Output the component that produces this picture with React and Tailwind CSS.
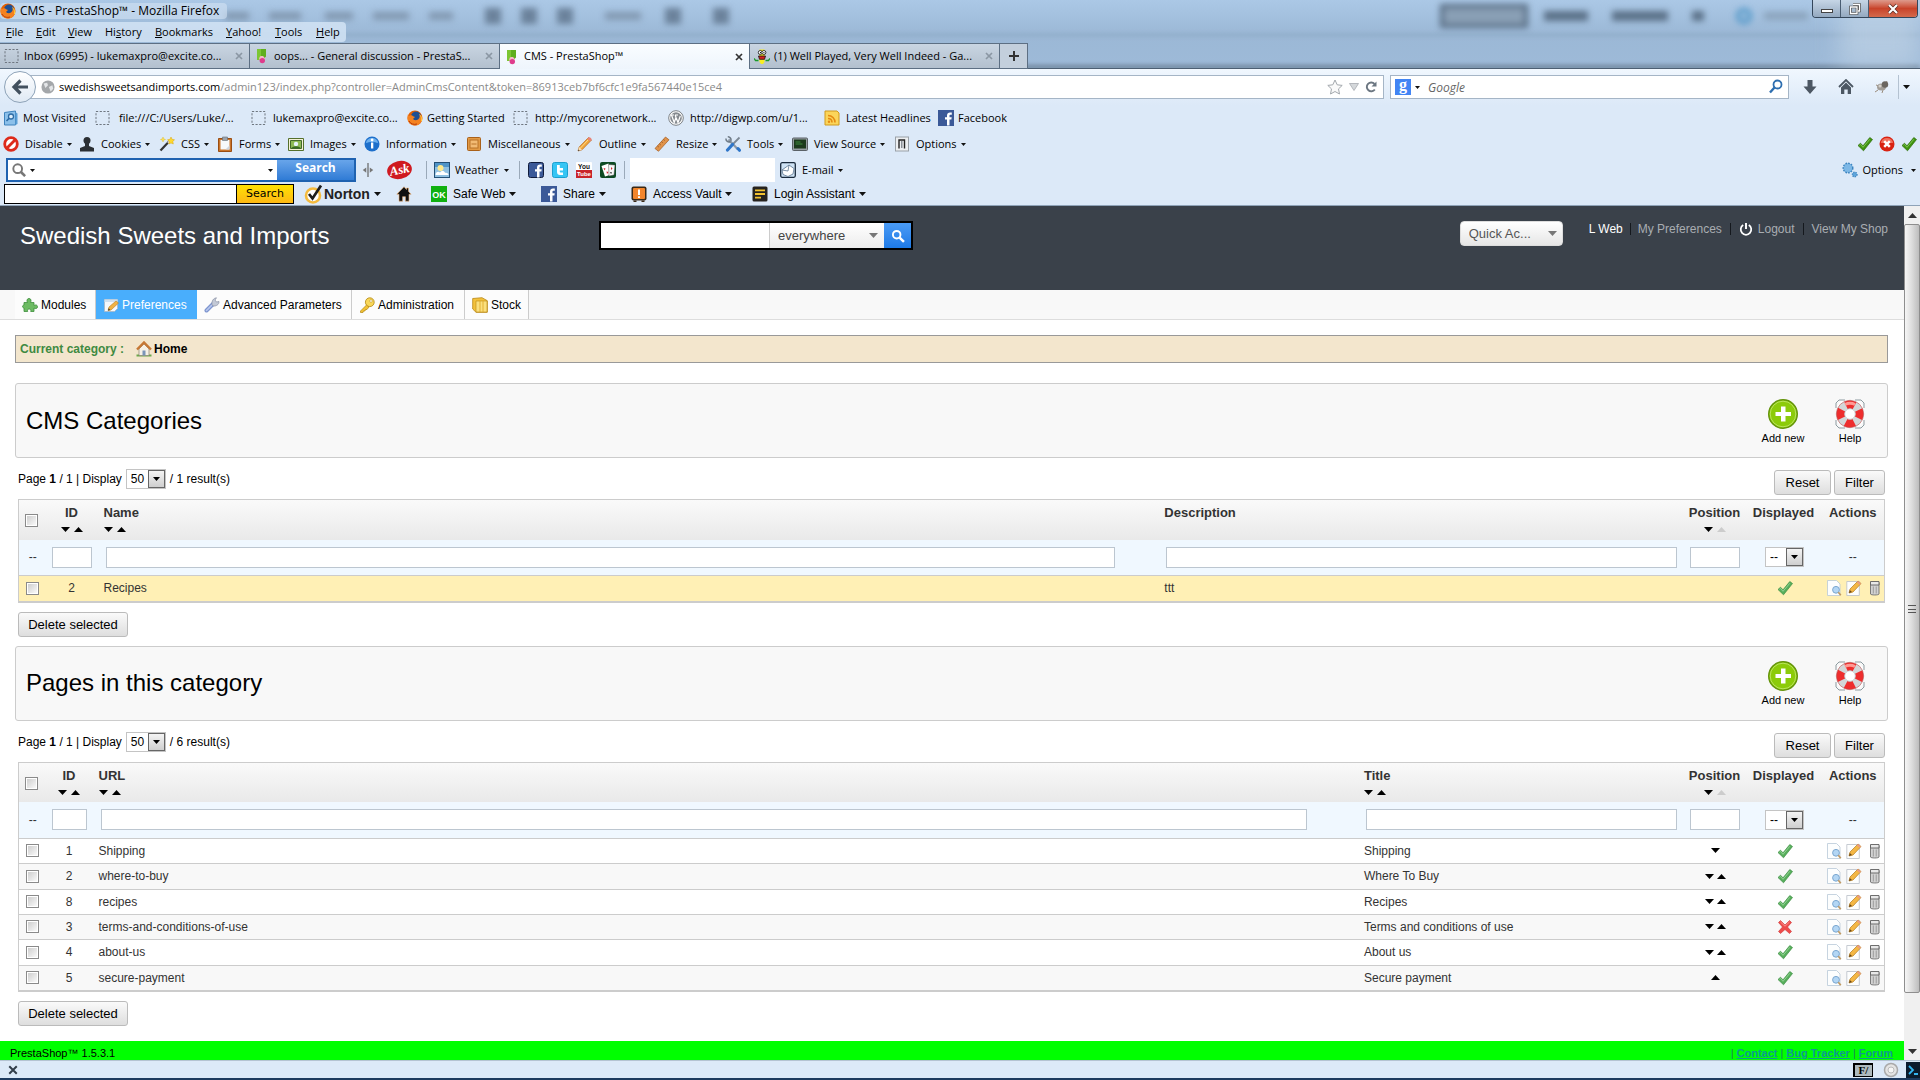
import React from "react";

const chromeFont = "font-['Open_Sans','Noto_Sans',sans-serif]";
const pageFont = "font-['Liberation_Sans',Arial,sans-serif]";

/* ---------- small drawings ---------- */

function Svg({ children, size = "size-4", box = "0 0 16 16", className = "" }) {
  return (
    <svg viewBox={box} className={`${size} shrink-0 ${className}`} fill="none" aria-hidden="true">
      {children}
    </svg>
  );
}

function Down({ className = "text-black" }) {
  return (
    <svg viewBox="0 0 9 5" className={`h-[5px] w-[9px] shrink-0 ${className}`} aria-hidden="true">
      <path d="M0 0h9L4.5 5z" fill="currentColor" />
    </svg>
  );
}

function Up({ className = "text-black" }) {
  return (
    <svg viewBox="0 0 9 5" className={`h-[5px] w-[9px] shrink-0 ${className}`} aria-hidden="true">
      <path d="M0 5h9L4.5 0z" fill="currentColor" />
    </svg>
  );
}

function Caret({ className = "" }) {
  return (
    <svg viewBox="0 0 5 3" className={`h-[3px] w-[5px] shrink-0 ${className}`} aria-hidden="true">
      <path d="M0 0h5L2.5 3z" fill="#111" />
    </svg>
  );
}

function WideCaret() {
  return (
    <svg viewBox="0 0 7 4" className="h-1 w-[7px] shrink-0" aria-hidden="true">
      <path d="M0 0h7L3.5 4z" fill="#111" />
    </svg>
  );
}

const Firefox = () => (
  <Svg>
    <circle cx="8" cy="8" r="7.500" fill="#e66000" />
    <circle cx="9" cy="6.500" r="5" fill="#1f4f93" />
    <path d="M1 4c0 1 .5 1.500 1 2 1-.8 2.500-1 3.500-.3.700.8 1.800.8 2.500 1.300-.5 1-1.800 1-1.800 2 .8 1.500 3.300 1.500 4.800.5 1.500-1 2-3 1.500-5 1.500 1.500 2.700 3.500 2 6.500-1 3.500-4 4.700-7 4.500C3 15 .5 12 .5 8.500.5 6.800.7 5 1 4z" fill="#f58220" />
    <path d="M12.500 4.500c1.500 1.500 2.700 3.500 2 6.500" stroke="#ffd23a" strokeWidth="1" />
    <path d="M2 11c1.500 3 5 4 8 3" stroke="#b53a0c" strokeWidth="1" />
  </Svg>
);

const Dashed = () => (
  <Svg>
    <rect x="1" y="1.500" width="13" height="13" stroke="#6f7780" strokeDasharray="2.200 1.500" />
  </Svg>
);

const Presta = () => (
  <Svg>
    <path d="M3 1h9v7.500l-3 3V9H7v3H3z" fill="#5fae1d" />
    <path d="M3 1h4v11H3z" fill="#7cc634" />
    <path d="M5.500 9.500c.5-2 4.500-2 5 .5l.5 1.500H5z" fill="#f6b7c8" />
    <circle cx="8.300" cy="12.600" r="2.700" fill="#df3c8c" />
  </Svg>
);

const Banana = () => (
  <Svg>
    <path d="M5.500 1.500h5V14L9 16H7l-1.500-2z" fill="#f8ee22" />
    <circle cx="6.300" cy="4.500" r="2" fill="#fff" stroke="#111" strokeWidth=".8" />
    <circle cx="9.900" cy="4.500" r="2" fill="#fff" stroke="#111" strokeWidth=".8" />
    <path d="M6 4h1v1.300H6zM9.400 4h1v1.300h-1z" fill="#111" />
    <path d="M4.500 8h7l-1 3.300h-5z" fill="#d42020" stroke="#111" strokeWidth=".8" />
    <path d="M0 10.500l1.500 2L4.500 12.500M16 10.500l-1.500 2L11.500 12.500" stroke="#1a9a2a" strokeWidth="1.300" />
  </Svg>
);

const MostVisited = () => (
  <Svg>
    <path d="M1.500 2.500l11-1.500v14H1.500z" fill="#8cc0ea" stroke="#3f83bd" />
    <path d="M12.500 2l2 1.500V14l-2 1z" fill="#5b9fd6" />
    <circle cx="8" cy="6.500" r="2.500" fill="#dceefb" stroke="#2d6ba5" strokeWidth="1.300" />
    <path d="M6.200 8.300L3.500 11" stroke="#2d6ba5" strokeWidth="1.600" />
  </Svg>
);

const WordPress = () => (
  <Svg>
    <circle cx="8" cy="8" r="7.300" fill="#fff" stroke="#7b8085" strokeWidth="1" />
    <circle cx="8" cy="8" r="5.800" fill="#858a8f" />
    <path d="M3.500 5l2.700 7.500L8 7.500l2 5L12.300 6M3 5h3M7 5h3M8 7.500L7.200 5" stroke="#fff" strokeWidth="1.200" />
  </Svg>
);

const Rss = () => (
  <Svg>
    <path d="M1 1h12l2 2v12H1z" fill="#fbd55a" stroke="#d19a1c" />
    <path d="M4 5.500c4 0 7 3 7 7M4 8.500c2.300 0 4 1.700 4 4" stroke="#e58a12" strokeWidth="1.600" />
    <circle cx="5" cy="11.700" r="1.200" fill="#e58a12" />
  </Svg>
);

const Facebook = ({ dark }) => (
  <Svg>
    <rect x=".5" y=".5" width="15" height="15" rx={dark ? 2 : 0} fill="#3b5998" stroke={dark ? "#101c3c" : "#3b5998"} />
    <path d="M9 15.500V9.500H7V7.300h2V5.500C9 3.500 10.200 2.500 12 2.500h1.800v2.200h-1.300c-.8 0-1 .4-1 1v1.600h2.200l-.3 2.200h-1.900v6z" fill="#fff" />
  </Svg>
);

const Twitter = () => (
  <Svg>
    <rect x=".5" y=".5" width="15" height="15" rx="2" fill="#36c5f4" stroke="#1b9fcf" />
    <path d="M5 3v7c0 2 1.200 3 3 3h3v-2.500H9c-.8 0-1.200-.4-1.200-1.200V8.500H11V6H7.800V3z" fill="#fff" />
  </Svg>
);

const YouTubeIcon = () => (
  <Svg>
    <rect x="0" y="0" width="16" height="16" rx="1" fill="#fff" />
    <path d="M0 8h16v8H0z" fill="#c9232b" />
    <text x="8" y="6.500" textAnchor="middle" fontSize="6.500" fontWeight="700" fill="#111" fontFamily="Liberation Sans">You</text>
    <text x="8" y="14.300" textAnchor="middle" fontSize="6" fontWeight="700" fill="#fff" fontFamily="Liberation Sans">Tube</text>
  </Svg>
);

const Cards = () => (
  <Svg>
    <rect width="16" height="16" rx="2" fill="#0d4a23" />
    <path d="M1.500 4l7-2.500 3 11-6.500 2z" fill="#fff" />
    <path d="M8.500 2.500l6.500.5-1 10-5 1z" fill="#f7f7f7" stroke="#333" strokeWidth=".4" />
    <path d="M3.500 6l2 .5-.8 2zM6.500 9.500l2 .5-1.500 2zM11 5l1.500 1.500L11 8z" fill="#d11f2b" />
    <path d="M10 10l2 .5-1 1.500z" fill="#111" />
  </Svg>
);

const NoEntry = () => (
  <Svg>
    <circle cx="8" cy="8" r="6.300" fill="#fff" stroke="#dd2a1b" strokeWidth="2.800" />
    <path d="M12.500 3.500l-9 9" stroke="#dd2a1b" strokeWidth="2.800" />
  </Svg>
);

const Person = () => (
  <Svg>
    <circle cx="8" cy="4.500" r="3.500" fill="#2b2f33" />
    <path d="M6 6h4v4l5 2v3.500H1V12l5-2z" fill="#2b2f33" />
  </Svg>
);

const Wand = () => (
  <Svg>
    <path d="M1.500 14.500l9-9.500" stroke="#333" strokeWidth="2.200" />
    <path d="M9 7l2-2" stroke="#ddd" strokeWidth="2" />
    <path d="M12 1l1 2.300 2.500.4-1.700 1.800.5 2.500L12 7l-2.200 1 .4-2.500-1.700-1.800L11 3.300z" fill="#ffd92e" stroke="#d8a511" strokeWidth=".5" />
    <path d="M4 1l.7 1.800L6.500 3.500l-1.800.6L4 6l-.7-1.900L1.500 3.500l1.800-.7z" fill="#ffe25a" stroke="#d8b511" strokeWidth=".4" />
  </Svg>
);

const Clipboard = () => (
  <Svg>
    <path d="M1.500 2.500h13v13h-13z" fill="#c9742a" stroke="#9a4d12" />
    <path d="M3.500 4h9v9.500h-9z" fill="#f6f9fd" />
    <path d="M12.500 9.500v4h-4z" fill="#cdd6e2" />
    <path d="M5.500 1h5v3.500h-5z" fill="#9ba4ae" stroke="#666e78" strokeWidth=".6" />
  </Svg>
);

const Picture = () => (
  <Svg>
    <path d="M.5 2.500h15v12H.5z" fill="#f4f1d8" stroke="#55702c" />
    <path d="M2.500 4.500h11v8h-11z" fill="#8db955" stroke="#44692a" />
    <circle cx="8" cy="8" r="2.200" fill="#e6f2fb" />
    <path d="M3 12.500c2-3 8-3 10 0z" fill="#386b24" />
  </Svg>
);

const Info = () => (
  <Svg>
    <circle cx="8" cy="8" r="7.500" fill="#1d6fcb" />
    <path d="M2 7a6 5 0 0112 0c-3-1.500-9-1.500-12 0z" fill="#6db0ee" />
    <path d="M7 6.500h2.300v6H7z" fill="#fff" />
    <circle cx="8.100" cy="4" r="1.400" fill="#fff" />
  </Svg>
);

const Drawer = () => (
  <Svg>
    <rect x="1.500" y="1.500" width="13" height="13" rx="1" fill="#e29a45" stroke="#a9611a" />
    <rect x="4" y="4" width="8" height="8" fill="#f2bb74" stroke="#b87229" />
    <path d="M5.500 8h5" stroke="#b87229" />
  </Svg>
);

const Pencil = () => (
  <Svg>
    <path d="M1 15l1.200-4L11.500 1.500l3 2.500L5 13.800z" fill="#f0a63a" stroke="#b5651a" strokeWidth=".7" />
    <path d="M11.500 1.500c1-1 3.800 1 3 2.500L13.200 5.300l-3-2.500z" fill="#e8837a" />
    <path d="M1 15l1.200-4L5 13.800z" fill="#f7dfb5" />
    <path d="M1 15l.5-1.600 1.100 1z" fill="#222" />
    <path d="M3.500 12L11 4" stroke="#ffdc8e" strokeWidth="1" />
  </Svg>
);

const Ruler = () => (
  <Svg>
    <path d="M1 12.500L11.500 1l3.500 2.800L4.500 15.300z" fill="#e0934a" stroke="#a3591b" strokeWidth=".7" />
    <path d="M3.500 10l1.300 1M5.500 8l1.300 1M7.500 5.800l1.300 1M9.500 3.500l1.300 1" stroke="#8a4712" strokeWidth=".7" />
  </Svg>
);

const CrossTools = () => (
  <Svg>
    <path d="M3.500 3.500l9.500 10" stroke="#8d99a6" strokeWidth="2.200" />
    <path d="M1 2.500a3 3 0 004.500 3M2.800.8a3 3 0 013 4" stroke="#6d7985" strokeWidth="1.500" />
    <path d="M14.500 1.500L8 8" stroke="#7c8894" strokeWidth="1.800" />
    <path d="M7.500 8.500l-5 5.500" stroke="#2f76c9" strokeWidth="3.200" strokeLinecap="round" />
    <path d="M13 12.500l1.500 1.800" stroke="#2f76c9" strokeWidth="3" strokeLinecap="round" />
  </Svg>
);

const Screen = () => (
  <Svg>
    <rect x=".5" y="2" width="15" height="12.500" rx="1" fill="#979ea3" stroke="#5a6166" />
    <rect x="2" y="3.500" width="12" height="9" fill="#1c3a1d" />
    <path d="M3.500 6h5M3.500 8h7" stroke="#3f8a3e" strokeWidth="1" />
  </Svg>
);

const Toggle = () => (
  <Svg>
    <rect x="1.500" y="1" width="13" height="14" fill="#eceff2" stroke="#9aa1a8" />
    <path d="M5 12.500V4h5.500v8.500" stroke="#222" strokeWidth="1.400" />
    <path d="M7 5h1.500v7H7z" fill="#8a9097" />
  </Svg>
);

const GreenTick = ({ dark }) => (
  <Svg>
    <path d="M1 9.500l2.500-2.300L6 9.800 12.800 1.500 15.500 3.500 6.500 14.800z" fill={dark ? "#3f930f" : "#57ae5b"} stroke={dark ? "#2c6d08" : "#3d8f45"} strokeWidth=".7" />
    <path d="M2.500 9.300l1-.8L6 11.300l6.800-8" stroke={dark ? "#86c95a" : "#98d69a"} strokeWidth=".9" />
  </Svg>
);

const RedCross = () => (
  <Svg>
    <path d="M3.500 1.500L8 6l4.500-4.500 2 2L10.500 8l4 4.500-2 2L8 10.500l-4.500 4-2-2L5.500 8l-4-4.500z" fill="#ee4b4b" stroke="#cf3232" strokeWidth=".6" />
    <path d="M3.500 3L8 7.200 12.500 3" stroke="#fa9a94" strokeWidth=".9" />
  </Svg>
);

const RedBadge = () => (
  <Svg>
    <circle cx="8" cy="8" r="7.500" fill="#d92212" />
    <path d="M2 7a6 5 0 0112 0z" fill="#f0705e" />
    <path d="M5.200 5.200l5.600 5.600M10.800 5.200l-5.600 5.600" stroke="#fff" strokeWidth="2.500" />
  </Svg>
);

const Weather = () => (
  <Svg>
    <rect x=".5" y=".5" width="15" height="15" fill="#8fc0e2" stroke="#234f74" />
    <path d="M1 1h14v4H1z" fill="#4f94c7" />
    <circle cx="6.500" cy="6" r="3" fill="#ffe98a" />
    <path d="M1.500 13c0-3 3-4 4.500-2.500 1-2.300 4.500-2 5 .3 2-.5 3.500.5 3.500 2.200z" fill="#fff" />
  </Svg>
);

const Email = () => (
  <Svg>
    <rect x=".7" y=".7" width="14.600" height="14.600" rx="1.500" fill="#cfe3f5" stroke="#1a2a3c" strokeWidth="1.300" />
    <path d="M2 8l7-5 5 3.500-1 5.500-5 2.500-5-2z" fill="#fff" stroke="#5d7690" strokeWidth=".8" />
    <path d="M2 8l6 1 1-6" stroke="#5d7690" strokeWidth=".8" />
  </Svg>
);

const NortonMark = () => (
  <Svg size="size-5" box="0 0 20 20">
    <circle cx="9" cy="11.500" r="7" fill="#fff" stroke="#f4bb3e" strokeWidth="2.600" />
    <path d="M5 10l3.500 4.500L17 1.500" stroke="#1d1d1b" strokeWidth="2.700" />
  </Svg>
);

const BlackHome = () => (
  <Svg>
    <path d="M8 .8L.8 8.200H3V15.200h3.600v-4.500h2.800v4.500H13V8.200h2.200L12.500 5.500V2h-2v1.500z" fill="#111" stroke="#f3b77a" strokeWidth=".6" />
  </Svg>
);

const OkIcon = () => (
  <Svg>
    <rect width="16" height="16" fill="#10b010" />
    <text x="8" y="11.500" textAnchor="middle" fontSize="9" fontWeight="700" fill="#fff" fontFamily="Liberation Sans">OK</text>
  </Svg>
);

const Vault = () => (
  <Svg>
    <rect x=".5" y=".5" width="15" height="14" rx="2" fill="#3a2a18" />
    <rect x="2" y="2" width="12" height="11" rx="1" fill="#f3852b" />
    <path d="M7 3.500h2V9H7zM7 10.200h2V12H7z" fill="#fff" />
    <path d="M2.500 14.500h3V16h-3zM10.500 14.500h3V16h-3z" fill="#3a2a18" />
  </Svg>
);

const Login = () => (
  <Svg>
    <rect x=".5" y=".5" width="15" height="15" rx="1.500" fill="#26231f" />
    <path d="M3 4.300h10M3 8h10M3 11.700h6" stroke="#f2c230" strokeWidth="1.800" />
  </Svg>
);

const BlueGears = () => (
  <Svg>
    <circle cx="6" cy="6" r="4.500" fill="#5fa6dd" stroke="#3a83bf" strokeWidth="2" strokeDasharray="1.600 1" />
    <circle cx="6" cy="6" r="4" fill="#7db8e6" />
    <circle cx="12.700" cy="12.500" r="2.300" fill="#5fa6dd" stroke="#3a83bf" strokeWidth="1.400" strokeDasharray="1.200 .9" />
  </Svg>
);

const Puzzle = () => (
  <Svg>
    <path d="M2 5.500h3.500c-1-1.500-.7-4 1.500-4s2.500 2.500 1.500 4H12v3c1.500-1 3.500-.7 3.500 1.300S13.500 12 12 11v3.500H8.700c.5-1.500 0-2.500-1.500-2.500s-2 1-1.500 2.500H2V11c-1-.3-1.500-.8-1.500-1.500S1 8.300 2 8z" fill="#6dbb63" stroke="#3e8e3c" strokeWidth=".8" />
  </Svg>
);

const PrefIcon = () => (
  <Svg>
    <path d="M1.500 2.500h13v9l-3 3h-10z" fill="#f5f8fb" stroke="#a9b7c5" strokeWidth=".8" />
    <path d="M1.500 2.500h13V5h-13z" fill="#cfe0ef" />
    <path d="M5 13.500l1-3.500L13 4l2.500 2-7.500 7z" fill="#f0b244" stroke="#b97d1c" strokeWidth=".6" />
    <path d="M5 13.500l.6-2.200 1.700 1.700z" fill="#4a3a20" />
  </Svg>
);

const Wrench = () => (
  <Svg>
    <path d="M2.500 13.500l7-7" stroke="#7e95cf" strokeWidth="4" strokeLinecap="round" />
    <path d="M2.500 13.500l6-6" stroke="#b8c8ee" strokeWidth="1.600" strokeLinecap="round" />
    <path d="M8 7.500C7.500 4 9.500 1 12.500.8L11 3l1.500 2L15 4.500C15.300 7.500 12 9.500 9 9z" fill="#c3c9d6" stroke="#7a8398" strokeWidth=".6" />
  </Svg>
);

const Key = () => (
  <Svg>
    <path d="M8 7.500L1.500 14v1.500H4l.5-1.500H6l.5-1.500H8L10 10z" fill="#f2c235" stroke="#b3860f" strokeWidth=".7" />
    <circle cx="10.800" cy="5.200" r="4.400" fill="#f8d75a" stroke="#b3860f" strokeWidth=".8" />
    <circle cx="12" cy="4" r="1.300" fill="#fff" stroke="#b3860f" strokeWidth=".5" />
  </Svg>
);

const Box = () => (
  <Svg>
    <path d="M.7 1.500L10 .7l5.300 3v11.600H4L.7 12z" fill="#f3c13b" stroke="#b98612" strokeWidth=".8" />
    <path d="M4 4h11v11H4z" fill="#fbe07d" stroke="#b98612" strokeWidth=".6" />
    <path d="M8 4v11M11 4v11" stroke="#e0ab2c" strokeWidth=".9" />
  </Svg>
);

const HomeIcon = () => (
  <Svg>
    <path d="M.5 14.500h15" stroke="#6aa84b" strokeWidth="2" />
    <path d="M3 8l5-5 5 5v6.500H3z" fill="#f6f1e6" stroke="#8b8270" strokeWidth=".7" />
    <path d="M1 8.500l7-7 7 7" stroke="#c77835" strokeWidth="2.400" />
    <path d="M6.500 9.500h3v5h-3z" fill="#7b95b8" />
  </Svg>
);

const AddIcon = () => (
  <Svg size="size-[30px]" box="0 0 30 30">
    <circle cx="15" cy="15" r="14.300" fill="#8ccb0a" stroke="#64930b" strokeWidth="1.400" />
    <circle cx="15" cy="15" r="12.800" stroke="#b9e35c" strokeWidth="1" />
    <path d="M13 7.500h4.500V13H23v4h-5.500v5.500H13V17H7.500v-4H13z" fill="#fff" />
  </Svg>
);

const Lifebuoy = () => (
  <Svg size="size-[30px]" box="0 0 30 30">
    <path d="M1 8l6-7h16l6 7v14l-6 7H7l-6-7z" fill="#fff" />
    <path d="M1 9V4l3-3h6M20 1h6l3 3v5M29 21v5l-3 3h-6M10 29H4l-3-3v-5" stroke="#8d9ba0" />
    <circle cx="15" cy="15" r="9.500" stroke="#d3d7d8" strokeWidth="8" />
    <circle cx="15" cy="15" r="9.500" stroke="#ee2d2d" strokeWidth="8" strokeDasharray="8.920 6" strokeDashoffset="4.460" />
    <path d="M10 5.500a11.500 11.500 0 0110 0" stroke="#ff9a94" strokeWidth="3" />
    <circle cx="15" cy="15" r="5.300" fill="#fff" stroke="#a9b2b5" strokeWidth=".6" />
    <circle cx="15" cy="15" r="13.700" stroke="#b34848" strokeWidth=".6" />
  </Svg>
);

const Preview = () => (
  <Svg>
    <path d="M1.500 .5h9l3.500 3.500v11.500h-12.500z" fill="#fdfefe" stroke="#b9c9d8" strokeWidth=".8" />
    <circle cx="10" cy="9.800" r="3.400" fill="#b3d6f4" stroke="#7ba7d0" strokeWidth="1" />
    <path d="M12.300 12.300l2.500 3" stroke="#c09a63" strokeWidth="1.700" />
  </Svg>
);

const Edit = () => (
  <Svg>
    <path d="M.8 1.500h12.500v14H.8z" fill="#fdfefe" stroke="#b9bfc8" strokeWidth=".8" />
    <path d="M3 13l1-4 8-8 3 2.500-8 8.500z" fill="#f4b745" stroke="#b37b1e" strokeWidth=".7" />
    <path d="M12 1l3 2.500-1.300 1.300-3-2.500z" fill="#e99a86" />
    <path d="M3 13l.8-3L6 12z" fill="#6b4a1d" />
  </Svg>
);

const Trash = () => (
  <Svg>
    <path d="M4.500 2.500h8.500V14c0 1.300-8.500 1.300-8.500 0z" fill="#d2d2d2" stroke="#6e6e6e" strokeWidth=".9" />
    <path d="M4.500 1.500h8.500v3.500H4.500z" fill="#e8e8e8" stroke="#5f5f5f" strokeWidth=".9" />
    <path d="M7.300 6.500v7M10.200 6.500v7" stroke="#9a9a9a" strokeWidth="1" />
  </Svg>
);

/* ---------- browser chrome ---------- */

function Glass() {
  return (
    <div className="absolute inset-0 overflow-hidden bg-linear-to-b from-[#abc8e6] via-[#9bb8d6] to-[#9ebad8]" aria-hidden="true">
      <div className="h-9 border-b-2 border-[#8aa6c2] blur-[2px]" />
      <div className="absolute inset-x-0 top-1 flex h-6 items-center blur-[3px]">
        <span className="ml-[225px] h-2 w-6 bg-[#8299b2]" />
        <span className="ml-5 h-2 w-8 bg-[#8299b2]" />
        <span className="ml-6 h-2 w-7 bg-[#8299b2]" />
        <span className="ml-5 h-2 w-9 bg-[#8299b2]" />
        <span className="ml-5 h-2 w-6 bg-[#8299b2]" />
        <span className="ml-8 size-4 bg-[#6b829b]" />
        <span className="ml-5 size-4 bg-[#6b829b]" />
        <span className="ml-5 size-4 bg-[#6b829b]" />
        <span className="ml-8 h-2 w-9 bg-[#8299b2]" />
        <span className="ml-6 size-4 bg-[#6b829b]" />
        <span className="ml-8 size-4 bg-[#6b829b]" />
        <span className="flex-1" />
        <span className="h-6 w-[88px] border-4 border-[#586d83] bg-[#899fb5]" />
        <span className="ml-4 h-2.5 w-11 bg-[#5b7188]" />
        <span className="ml-6 h-2.5 w-14 bg-[#5b7188]" />
        <span className="ml-6 h-2.5 w-3 bg-[#5b7188]" />
        <span className="ml-8 size-4 rounded-full border-4 border-[#4f97c8]" />
        <span className="mr-28 ml-3 h-2 w-11 bg-[#8ba4bd]" />
      </div>
      <div className="absolute inset-x-0 bottom-0 h-1 bg-[#6d8399] blur-[2px]" />
      <div className="absolute top-0 right-0 h-full w-20 bg-[#c4d6e8] opacity-60 blur-md" />
    </div>
  );
}

const menus = [
  ["F", "ile", "", "w-[30px]"],
  ["E", "dit", "", "w-8"],
  ["V", "iew", "", "w-[37px]"],
  ["s", "tory", "Hi", "w-[50px]"],
  ["B", "ookmarks", "", "w-[71px]"],
  ["Y", "ahoo!", "", "w-[49px]"],
  ["T", "ools", "", "w-[41px]"],
  ["H", "elp", "", "w-[30px]"],
];

function TitleAndMenu() {
  return (
    <>
      <div className="relative flex h-[22px] items-center">
        <div className="flex items-center gap-1 rounded bg-[#d3e3f4]/60 pr-2 text-xs">
          <Firefox />
          <span>CMS - PrestaShop™ - Mozilla Firefox</span>
        </div>
        <div className="mr-0.5 ml-auto flex h-[18px] self-start overflow-hidden rounded-b border border-t-0 border-[#34465a]">
          <button aria-label="Minimize" className="flex w-7 items-end justify-center border-r border-[#4a5d72] bg-linear-to-b from-[#c6d6e6] to-[#94a9c0] pb-1">
            <span className="h-1 w-3 border border-[#444] bg-white" />
          </button>
          <button aria-label="Restore" className="flex w-7 items-center justify-center border-r border-[#4a5d72] bg-linear-to-b from-[#c6d6e6] to-[#94a9c0]">
            <Svg size="size-3" box="0 0 12 12">
              <path d="M4 1.500h6.500V8H9M1.500 4H8v6.500H1.500z" stroke="#444" strokeWidth="2.600" />
              <path d="M4 1.500h6.500V8H9M1.500 4H8v6.500H1.500z" stroke="#fff" strokeWidth="1.300" />
            </Svg>
          </button>
          <button aria-label="Close" className="flex w-12 items-center justify-center bg-linear-to-b from-[#dd9a8c] via-[#c8432a] to-[#d4694c]">
            <Svg size="size-3" box="0 0 12 12">
              <path d="M2 2l8 8M10 2l-8 8" stroke="#5a2a20" strokeWidth="3.600" />
              <path d="M2 2l8 8M10 2l-8 8" stroke="#fff" strokeWidth="2.200" />
            </Svg>
          </button>
        </div>
      </div>
      <nav className="relative flex h-[21px] items-start">
        <div className="flex h-5 items-center rounded-r bg-[#d6e6f6]/80 pl-1.5">
          {menus.map(([key, rest, before, w]) => (
            <button key={key + rest} className={`${w} text-left whitespace-nowrap`}>
              {before}
              <span className="underline">{key}</span>
              {rest}
            </button>
          ))}
        </div>
      </nav>
    </>
  );
}

function CloseX({ active }) {
  return (
    <button aria-label="Close tab" className={active ? "text-[#333]" : "text-[#8b97a4]"}>
      <Svg size="size-2" box="0 0 8 8">
        <path d="M1 1l6 6M7 1L1 7" stroke="currentColor" strokeWidth="1.700" />
      </Svg>
    </button>
  );
}

function Tab({ icon, label, active }) {
  return (
    <div
      className={`flex h-[26px] w-[250px] items-center gap-1 border-t border-r border-[#5d6f83] pr-1.5 pl-1 ${
        active ? "bg-linear-to-b from-[#fafdff] to-[#eef5fc]" : "border-b bg-linear-to-b from-[#c9d5e2] to-[#b3c0ce]"
      }`}
    >
      {icon}
      <button className="flex-1 text-left whitespace-nowrap">{label}</button>
      <CloseX active={active} />
    </div>
  );
}

function Tabs() {
  return (
    <div className="relative flex h-[26px]">
      <Tab icon={<Dashed />} label="Inbox (6995) - lukemaxpro@excite.co..." />
      <Tab icon={<Presta />} label="oops... - General discussion - PrestaS..." />
      <Tab icon={<Presta />} label="CMS - PrestaShop™" active />
      <Tab icon={<Banana />} label="(1) Well Played, Very Well Indeed - Ga..." />
      <button aria-label="New tab" className="flex w-7 items-center justify-center border-t border-r border-b border-[#5d6f83] bg-[#c3cfdc]">
        <Svg size="size-3" box="0 0 12 12">
          <path d="M6 1v10M1 6h10" stroke="#333" strokeWidth="2" />
        </Svg>
      </button>
      <div className="flex-1 border-b border-[#4d5f73]" />
    </div>
  );
}

function NavBar() {
  return (
    <div className="flex h-9 items-center bg-linear-to-b from-[#f0f7fe] to-[#dce9f8] pl-1">
      <button aria-label="Back" className="z-10 flex size-8 shrink-0 items-center justify-center rounded-full border border-[#8ea3b8] bg-linear-to-b from-white to-[#dfe9f4]">
        <Svg size="size-[18px]" box="0 0 18 18">
          <path d="M9.500 2.500L3 9l6.500 6.500M3.500 9H17" stroke="#42505e" strokeWidth="3.200" />
        </Svg>
      </button>
      <div className="-ml-3 flex h-6 flex-1 items-center border border-[#a5b5c6] bg-white pr-1.5 pl-4">
        <Svg size="size-3.5">
          <circle cx="8" cy="8" r="7.500" fill="#a4a7aa" />
          <path d="M3 4l4-1 1 3-3 3zM9 8l4-2 1 4-3 3z" fill="#e4e6e8" />
        </Svg>
        <button className="ml-1 flex-1 text-left text-[#8a8a8a]">
          <span className="text-black">swedishsweetsandimports.com</span>
          /admin123/index.php?controller=AdminCmsContent&amp;token=86913ceb7bf6cfc1e9fa567440e15ce4
        </button>
        <button aria-label="Bookmark this page">
          <Svg>
            <path d="M8 1l2.200 4.800 5 .6-3.700 3.500 1 5.100L8 12.500 3.500 15l1-5.100L.8 6.400l5-.6z" fill="#fafafa" stroke="#a3a8ad" strokeWidth="1" />
          </Svg>
        </button>
        <button aria-label="History" className="ml-1.5">
          <Svg size="size-2.5" box="0 0 10 10">
            <path d="M.5 1.500h9L5 8.500z" fill="#d5d8db" stroke="#a7abb0" strokeWidth=".8" />
          </Svg>
        </button>
        <button aria-label="Reload" className="ml-1.5">
          <Svg size="size-3" box="0 0 12 12">
            <path d="M9.800 8.500A4.400 4.400 0 119.500 3" stroke="#6b7681" strokeWidth="1.900" />
            <path d="M11.500.5v5h-5z" fill="#6b7681" />
          </Svg>
        </button>
      </div>
      <div className="ml-1.5 flex h-6 w-[399px] items-center border border-[#a5b5c6] bg-white px-1">
        <span className="flex size-4 items-center justify-center bg-[#4285f4] pb-1 font-['Liberation_Serif',serif] text-base leading-none font-bold text-white">g</span>
        <span className="ml-1"><Caret /></span>
        <input aria-label="Search the web" placeholder="Google" className="ml-2 h-5 min-w-0 flex-1 text-xs italic outline-none placeholder:text-[#666]" />
        <button aria-label="Go">
          <Svg>
            <circle cx="9.500" cy="5.500" r="4" stroke="#2d6eb0" strokeWidth="1.800" />
            <path d="M6.500 8.500L2 13.500" stroke="#2d6eb0" strokeWidth="2.400" />
          </Svg>
        </button>
      </div>
      <div className="flex w-[131px] items-center pl-[13px]">
        <button aria-label="Downloads">
          <Svg>
            <path d="M5.500 1h5v6.500h4L8 15 1.500 7.500h4z" fill="#4c5763" />
          </Svg>
        </button>
        <button aria-label="Home" className="ml-5">
          <Svg>
            <path d="M1 8l7-7 7 7" stroke="#4c5763" strokeWidth="1.800" />
            <path d="M3 8.500l5-5 5 5V15H9.700v-4.500H6.300V15H3z" fill="#4c5763" />
          </Svg>
        </button>
        <button aria-label="Firebug" className="ml-5">
          <Svg>
            <path d="M1 13l3-2M2 6l3 1M13 2l-1 2M8 14l1-3" stroke="#9a8c7c" />
            <ellipse cx="7.500" cy="8" rx="4.500" ry="3.500" fill="#a19d97" />
            <circle cx="11" cy="5.500" r="3.200" fill="#6a655f" />
            <circle cx="6" cy="7" r="1.500" fill="#d5d1cb" />
          </Svg>
        </button>
        <span className="ml-2 h-6 w-px bg-[#b4c2d1]" />
        <span className="ml-1"><WideCaret /></span>
      </div>
    </div>
  );
}

const bookmarks = [
  [MostVisited, "Most Visited", "w-[92px]", "gap-1"],
  [Dashed, "file:///C:/Users/Luke/...", "w-[156px]", "gap-2"],
  [Dashed, "lukemaxpro@excite.co...", "w-[156px]", "gap-1.5"],
  [Firefox, "Getting Started", "w-[106px]", "gap-1"],
  [Dashed, "http://mycorenetwork...", "w-[155px]", "gap-1.5"],
  [WordPress, "http://digwp.com/u/1...", "w-[156px]", "gap-1.5"],
  [Rss, "Latest Headlines", "w-[114px]", "gap-1.5"],
  [Facebook, "Facebook", "w-20", "gap-1"],
];

const devTools = [
  [NoEntry, "Disable", "w-[76px]"],
  [Person, "Cookies", "w-20"],
  [Wand, "CSS", "w-[58px]"],
  [Clipboard, "Forms", "w-[71px]"],
  [Picture, "Images", "w-[76px]"],
  [Info, "Information", "w-[102px]"],
  [Drawer, "Miscellaneous", "w-[111px]"],
  [Pencil, "Outline", "w-[77px]"],
  [Ruler, "Resize", "w-[71px]"],
  [CrossTools, "Tools", "w-[67px]"],
  [Screen, "View Source", "w-[102px]"],
  [Toggle, "Options", "w-[80px]"],
];

function Toolbars() {
  return (
    <div className="border-b border-[#8fa3b8] bg-[#dce9f8]">
      <div className="flex h-[26px] items-center pl-[3px]">
        {bookmarks.map(([Icon, label, w, gap]) => (
          <button key={label} className={`flex ${w} ${gap} shrink-0 items-center whitespace-nowrap`}>
            <Icon />
            {label}
          </button>
        ))}
      </div>
      <div className="flex h-[26px] items-center pl-[3px]">
        {devTools.map(([Icon, label, w]) => (
          <button key={label} className={`flex ${w} shrink-0 items-center whitespace-nowrap`}>
            <Icon />
            <span className="mr-1 ml-1.5">{label}</span>
            <Caret />
          </button>
        ))}
        <div className="mr-[3px] ml-auto flex items-center gap-1.5">
          <GreenTick dark />
          <RedBadge />
          <GreenTick dark />
        </div>
      </div>
      <div className="flex h-[26px] items-center pl-1.5">
        <div className="flex h-6 w-[350px] border-2 border-[#1f62b0] bg-white">
          <div className="flex flex-1 items-center px-1">
            <Svg size="size-3.5">
              <circle cx="6.500" cy="6.500" r="5" stroke="#777" strokeWidth="2.200" />
              <path d="M10 10l5 5" stroke="#777" strokeWidth="3" />
            </Svg>
            <span className="ml-1"><Caret /></span>
            <input aria-label="Ask search" className="h-4 min-w-0 flex-1 outline-none" />
            <Caret />
          </div>
          <button className="flex w-[77px] items-start justify-center bg-linear-to-b from-[#68a5ea] to-[#2f7bd5] text-xs leading-4 font-bold text-white">Search</button>
        </div>
        <span className="ml-[5px]">
          <Svg size="size-3.5">
            <path d="M8 0v16" stroke="#666" strokeWidth="1.400" />
            <path d="M6 5L2 8l4 3zM10 5l4 3-4 3z" fill="#777" />
          </Svg>
        </span>
        <button className="ml-3 flex h-[18px] w-[25px] -rotate-12 items-center justify-center rounded-[50%] bg-[#cf1a20] font-['Liberation_Serif',serif] text-[13px] font-bold text-white italic">Ask</button>
        <span className="mr-[7px] ml-3.5 h-[18px] w-px bg-[#9aa9b9]" />
        <button className="flex w-[85px] items-center gap-[5px]">
          <Weather />
          Weather
          <Caret />
        </button>
        <span className="mr-2 h-[18px] w-px bg-[#9aa9b9]" />
        <div className="flex items-center gap-2">
          <button aria-label="Facebook"><Facebook dark /></button>
          <button aria-label="Twitter"><Twitter /></button>
          <button aria-label="YouTube"><YouTubeIcon /></button>
          <button aria-label="Games"><Cards /></button>
        </div>
        <span className="mr-[5px] ml-2 h-[18px] w-px bg-[#9aa9b9]" />
        <div className="h-6 w-[145px] bg-white" />
        <button className="ml-[5px] flex items-center gap-1">
          <Email />
          <span className="ml-0.5">E-mail</span>
          <Caret />
        </button>
        <button className="mr-1 ml-auto flex items-center gap-1">
          <BlueGears />
          Options
          <span className="ml-1"><Caret /></span>
        </button>
      </div>
      <div className={`flex h-[22px] items-center pl-1 text-xs ${pageFont}`}>
        <div className="flex h-5 w-[290px] border border-black bg-white">
          <input aria-label="Norton search" className="min-w-0 flex-1 outline-none" />
          <button className="w-[57px] border-l border-black bg-linear-to-b from-[#ffe100] to-[#fdb813] font-['DejaVu_Sans',sans-serif] text-[11px] leading-4">Search</button>
        </div>
        <button className="ml-2.5 flex w-[92px] items-center">
          <NortonMark />
          <span className="mr-1 text-sm leading-5 font-bold text-[#222]">Norton</span>
          <WideCaret />
        </button>
        <button aria-label="Norton home" className="w-[35px]"><BlackHome /></button>
        <button className="flex w-[110px] items-center gap-1"><OkIcon /><span className="ml-0.5">Safe Web</span><WideCaret /></button>
        <button className="flex w-[90px] items-center gap-1"><Facebook /><span className="ml-0.5">Share</span><WideCaret /></button>
        <button className="flex w-[121px] items-center gap-1"><Vault /><span className="ml-0.5">Access Vault</span><WideCaret /></button>
        <button className="flex items-center gap-1"><Login /><span className="ml-0.5">Login Assistant</span><WideCaret /></button>
      </div>
    </div>
  );
}

/* ---------- page ---------- */

function Header() {
  return (
    <header className="flex h-[84px] items-start bg-[#3a414a] pt-[15px] pr-4 pl-5">
      <h1 className="w-[31%] text-2xl leading-[30px] text-white">Swedish Sweets and Imports</h1>
      <form className="flex h-[29px] w-[314px] border-2 border-black bg-white" onSubmit={(e) => e.preventDefault()}>
        <input aria-label="Search" className="min-w-0 flex-1 outline-none" />
        <div className="relative w-[115px] border-l border-[#ccc] bg-linear-to-b from-white to-[#ececec]">
          <select aria-label="Search in" className="h-full w-full appearance-none pl-2 text-[13px] text-[#444] outline-none">
            <option>everywhere</option>
          </select>
          <span className="pointer-events-none absolute top-2.5 right-1.5 flex"><Down className="text-[#777]" /></span>
        </div>
        <button aria-label="Search shop" className="flex w-[27px] items-center justify-center bg-linear-to-b from-[#4a9bf5] to-[#1d7ae6]">
          <Svg size="size-3.5">
            <circle cx="6.500" cy="6.500" r="4.300" stroke="#fff" strokeWidth="2.200" />
            <path d="M9.800 9.800l5 5" stroke="#fff" strokeWidth="2.800" />
          </Svg>
        </button>
      </form>
      <div className="flex flex-1 items-start justify-end text-[#a9adb2]">
        <div className="relative mr-[26px] h-[25px] w-[103px]">
          <select aria-label="Quick access" className="h-full w-full appearance-none rounded border border-[#ddd] bg-linear-to-b from-white to-[#e6e6e6] pl-2 text-[13px] text-[#555] outline-none">
            <option>Quick Ac...</option>
          </select>
          <span className="pointer-events-none absolute top-2.5 right-1.5 flex"><Down className="text-[#777]" /></span>
        </div>
        <div className="flex h-4 items-center">
          <span className="text-white">L Web</span>
          <span className="mx-[7px] h-3 w-px bg-[#14181d]" />
          <a href="#preferences">My Preferences</a>
          <span className="mx-2 h-3 w-px bg-[#14181d]" />
          <Svg size="size-3.5">
            <path d="M4.800 3.500a6 6 0 106.400 0" stroke="#fff" strokeWidth="2" />
            <path d="M8 1v7" stroke="#fff" strokeWidth="2.200" />
          </Svg>
          <a href="#logout" className="ml-[5px]">Logout</a>
          <span className="mx-2 h-3 w-px bg-[#14181d]" />
          <a href="#shop">View My Shop</a>
        </div>
      </div>
    </header>
  );
}

const sections = [
  [Puzzle, "Modules", "w-[81px]"],
  [PrefIcon, "Preferences", "w-[101px]"],
  [Wrench, "Advanced Parameters", "w-[155px]"],
  [Key, "Administration", "w-[113px]"],
  [Box, "Stock", "w-16"],
];

function SectionMenu() {
  return (
    <nav className="flex h-[30px] border-b border-[#ddd] bg-[#f8f8f8] pl-[15px]">
      {sections.map(([Icon, label, w], i) => (
        <a
          key={label}
          href={`#${label}`}
          className={`flex ${w} items-center gap-[3px] border-r pl-[7px] whitespace-nowrap ${
            i === 1 ? "border-[#49aefc] bg-[#49aefc] text-white" : "border-[#ccc] bg-[#fcfcfc] text-black"
          }`}
        >
          <Icon />
          {label}
        </a>
      ))}
    </nav>
  );
}

function Toolbox({ title }) {
  return (
    <div className="flex h-[75px] items-center rounded-[3px] border border-[#ccc] bg-[#f8f8f8] pr-1 pl-2.5">
      <h2 className="flex-1 text-2xl leading-[30px] text-black">{title}</h2>
      <button className="flex w-[68px] flex-col items-center gap-0.5 pt-0.5 text-[11px] leading-[14px] text-black">
        <AddIcon />
        Add new
      </button>
      <button className="flex w-[66px] flex-col items-center gap-0.5 pt-0.5 text-[11px] leading-[14px] text-black">
        <Lifebuoy />
        Help
      </button>
    </div>
  );
}

function MiniSelect({ label, value, width }) {
  return (
    <span className={`relative inline-flex h-5 ${width} border border-[#c4c4c4] bg-white`}>
      <select aria-label={label} className="h-full w-full appearance-none pl-1 text-xs text-black outline-none">
        <option>{value}</option>
      </select>
      <span className="pointer-events-none absolute inset-y-0 right-0 flex w-[17px] items-center justify-center border border-[#666] bg-linear-to-b from-[#f4f4f4] to-[#cfcfcf]">
        <svg viewBox="0 0 7 4" className="h-1 w-[7px]" aria-hidden="true">
          <path d="M0 0h7L3.5 4z" fill="#000" />
        </svg>
      </span>
    </span>
  );
}

const buttonStyle =
  "h-[25px] rounded-[3px] border border-[#bbb] bg-linear-to-b from-[#fafafa] to-[#dedede] text-[13px] leading-none text-black";

function PageRow({ count }) {
  return (
    <div className="flex h-8 items-start justify-between px-[3px]">
      <div className="mt-px flex h-[22px] items-center gap-1 text-black">
        <span>
          Page <b>1</b> / 1 | Display
        </span>
        <MiniSelect label="Rows per page" value="50" width="w-10" />
        <span>/ {count} result(s)</span>
      </div>
      <div className="mt-[3px] flex gap-[3px]">
        <button className={`${buttonStyle} w-[57px]`}>Reset</button>
        <button className={`${buttonStyle} w-[51px]`}>Filter</button>
      </div>
    </div>
  );
}

function Check({ label }) {
  return (
    <input
      type="checkbox"
      aria-label={label}
      className="block size-[13px] appearance-none border border-[#8a8a8a] bg-linear-to-br from-[#c9c9c9] to-white shadow-[inset_0_0_0_1px_#fff]"
    />
  );
}

function Sort({ dim }) {
  return (
    <span className="mt-1.5 flex gap-1">
      <Down />
      <Up className={dim ? "text-[#ccc]" : "text-black"} />
    </span>
  );
}

const field = "block h-[21px] border border-[#bcc6d0] bg-white px-1 outline-none";

function DataTable({ name, idWidth, lastWidth, columns, rows }) {
  return (
    <table className="w-full table-fixed border-collapse border border-b-2 border-[#ccc] text-[#333]">
      <colgroup>
        <col className="w-7" />
        <col className={idWidth} />
        <col />
        <col className={lastWidth} />
        <col className="w-[62px]" />
        <col className="w-[76px]" />
        <col className="w-[63px]" />
      </colgroup>
      <thead>
        <tr className="h-10 bg-linear-to-b from-[#fafafa] to-[#e9e9e9] text-left align-top text-[13px] leading-4">
          <th className="pt-3.5 pl-1.5"><Check label={`Select all ${name}`} /></th>
          <th className="pt-[5px]">
            <span className="flex flex-col items-center">ID<Sort /></span>
          </th>
          {columns.map(([label, sortable]) => (
            <th key={label} className="pt-[5px] pl-[7px]">
              {label}
              {sortable && <Sort />}
            </th>
          ))}
          <th className="pt-[5px]">
            <span className="flex flex-col items-center">Position<Sort dim /></span>
          </th>
          <th className="pt-[5px] text-center">Displayed</th>
          <th className="pt-[5px] text-center">Actions</th>
        </tr>
        <tr className="h-9 border-b border-[#ccc] bg-[#f0f8ff]">
          <td className="text-center">--</td>
          <td className="px-[5px]"><input aria-label={`${name} ID filter`} className={`${field} w-full`} /></td>
          <td className="pl-[9px]"><input aria-label={`${columns[0][0]} filter`} className={`${field} w-[96%]`} /></td>
          <td className="pr-[7px] pl-[9px]"><input aria-label={`${columns[1][0]} filter`} className={`${field} w-full`} /></td>
          <td className="px-1.5"><input aria-label={`${name} position filter`} className={`${field} w-full`} /></td>
          <td className="text-center align-middle">
            <span className="flex justify-center pl-0.5"><MiniSelect label="Displayed filter" value="--" width="w-[39px]" /></span>
          </td>
          <td className="text-center">--</td>
        </tr>
      </thead>
      <tbody>
        {rows.map((r) => (
          <tr key={r.id} className={`border-b border-[#ccc] ${r.style}`}>
            <td className="pl-[7px]"><Check label={`Select ${r.a}`} /></td>
            <td className="text-center">{r.id}</td>
            <td className="pl-[7px]">{r.a}</td>
            <td className="pl-[7px]">{r.b}</td>
            <td>
              <span className="flex justify-center gap-[3px] pl-0.5">
                {r.move.includes("d") && <Down />}
                {r.move.includes("u") && <Up />}
              </span>
            </td>
            <td>
              <span className="flex justify-center pl-0.5">{r.on ? <GreenTick /> : <RedCross />}</span>
            </td>
            <td>
              <span className="flex justify-center gap-1 pl-0.5">
                <button aria-label={`View ${r.a}`}><Preview /></button>
                <button aria-label={`Edit ${r.a}`}><Edit /></button>
                <button aria-label={`Delete ${r.a}`}><Trash /></button>
              </span>
            </td>
          </tr>
        ))}
      </tbody>
    </table>
  );
}

const categoryRows = [{ id: 2, a: "Recipes", b: "ttt", move: "", on: true, style: "h-[26px] bg-[#fff0b5]" }];

const pageRows = [
  { id: 1, a: "Shipping", b: "Shipping", move: "d", on: true, style: "h-[25px] bg-white" },
  { id: 2, a: "where-to-buy", b: "Where To Buy", move: "du", on: true, style: "h-[26px] bg-[#f8f8f8]" },
  { id: 8, a: "recipes", b: "Recipes", move: "du", on: true, style: "h-[25px] bg-white" },
  { id: 3, a: "terms-and-conditions-of-use", b: "Terms and conditions of use", move: "du", on: false, style: "h-[25px] bg-[#f8f8f8]" },
  { id: 4, a: "about-us", b: "About us", move: "du", on: true, style: "h-[26px] bg-white" },
  { id: 5, a: "secure-payment", b: "Secure payment", move: "u", on: true, style: "h-[26px] bg-[#f8f8f8]" },
];

function Scrollbar() {
  return (
    <div className="flex w-4 shrink-0 flex-col items-center bg-[#f0f0f0]" aria-hidden="true">
      <div className="flex h-[18px] items-center"><Up className="text-[#333]" /></div>
      <div className="flex w-full flex-1 items-center justify-center rounded-[2px] border border-[#8e8e8e] bg-linear-to-r from-[#f6f6f6] via-[#dcdcdc] to-[#bdbdbd]">
        <span className="h-2 w-2 border-y border-[#555]"><span className="mt-[3px] block h-px bg-[#555]" /></span>
      </div>
      <div className="flex h-[67px] items-end pb-1.5"><Down className="text-[#333]" /></div>
    </div>
  );
}

export default function App() {
  return (
    <div className={`flex min-h-screen flex-col overflow-hidden bg-[#dce9f8] text-[11px] text-black ${chromeFont}`}>
      <div className="relative">
        <Glass />
        <TitleAndMenu />
        <Tabs />
      </div>
      <NavBar />
      <Toolbars />
      <div className={`flex flex-1 text-xs ${pageFont}`}>
        <div className="flex min-w-0 flex-1 flex-col bg-white">
          <Header />
          <SectionMenu />
          <main className="flex-1 pr-4 pl-[15px]">
            <div className="mt-[15px] flex h-7 items-center border border-[#999] bg-[#f3e6cd] pl-1 font-bold">
              <span className="text-[#3f8a41]">Current category :</span>
              <span className="ml-3 flex items-center gap-0.5">
                <HomeIcon />
                Home
              </span>
            </div>
            <div className="mt-5 mb-[9px]">
              <Toolbox title="CMS Categories" />
            </div>
            <PageRow count={1} />
            <div className="px-[3px] pb-[9px]">
              <DataTable
                name="categories"
                idWidth="w-[50px]"
                lastWidth="w-[28.2%]"
                columns={[["Name", true], ["Description", false]]}
                rows={categoryRows}
              />
              <button className={`${buttonStyle} mt-[9px] w-[110px]`}>Delete selected</button>
            </div>
            <div className="mb-[9px]">
              <Toolbox title="Pages in this category" />
            </div>
            <PageRow count={6} />
            <div className="px-[3px] pb-[15px]">
              <DataTable
                name="pages"
                idWidth="w-[45px]"
                lastWidth="w-[17.5%]"
                columns={[["URL", true], ["Title", true]]}
                rows={pageRows}
              />
              <button className={`${buttonStyle} mt-[9px] w-[110px]`}>Delete selected</button>
            </div>
          </main>
          <footer className="flex h-[19px] items-end justify-between bg-[#00ff00] pr-[11px] pl-2.5 text-[11px] leading-[14px]">
            <span>PrestaShop™ 1.5.3.1</span>
            <span className="flex gap-[3px] text-[#1b7f5c]">
              |<a href="#contact" className="font-bold text-[#0d9a92] underline">Contact</a>
              |<a href="#bugs" className="font-bold text-[#0d9a92] underline">Bug Tracker</a>
              |<a href="#forum" className="font-bold text-[#0d9a92] underline">Forum</a>
            </span>
          </footer>
        </div>
        <Scrollbar />
      </div>
      <div className="flex h-5 items-center border-t border-b-2 border-t-[#b4c3d2] border-b-[#1d3a5f] pl-2">
        <button aria-label="Close add-on bar">
          <Svg size="size-2.5" box="0 0 8 8">
            <path d="M1 1l6 6M7 1L1 7" stroke="#333e4a" strokeWidth="1.600" />
          </Svg>
        </button>
        <span className="ml-auto flex h-3.5 w-5 items-center justify-center border border-t-2 border-l-2 border-black bg-[#aeb9bd] font-['Liberation_Serif',serif] text-[11px] leading-none font-bold">F/</span>
        <span className="ml-2.5">
          <Svg>
            <circle cx="8" cy="8" r="6.500" fill="#e4e4e4" stroke="#a9a9a9" strokeWidth="1.500" />
            <circle cx="8" cy="8" r="3" fill="#f6f6f6" stroke="#bbb" />
          </Svg>
        </span>
        <span className="ml-[7px] flex h-4 w-3.5 items-center justify-center bg-[#0b1c2e]">
          <Svg size="size-3" box="0 0 12 12">
            <path d="M2 2l4 4-4 4M7 10h4" stroke="#35b5f0" strokeWidth="1.800" />
          </Svg>
        </span>
      </div>
    </div>
  );
}
